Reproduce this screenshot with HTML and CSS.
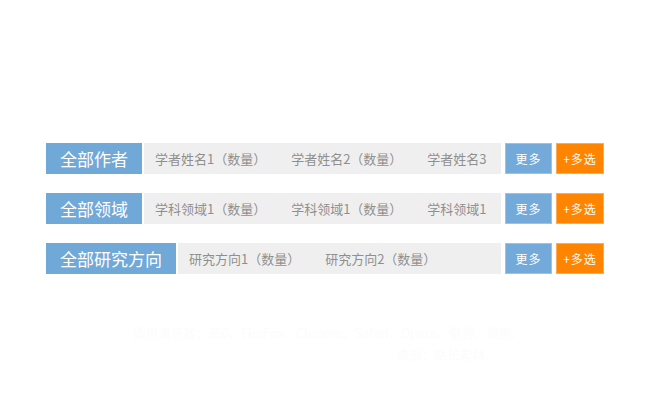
FILE: index.html
```html
<!DOCTYPE html>
<html lang="zh-CN">
<head>
<meta charset="utf-8">
<title>筛选</title>
<link rel="stylesheet" href="styles.css">
</head>
<body>
<div class="page">
  <div class="filters">
    <div class="row">
      <div class="label">全部作者</div>
      <div class="list">
        <span class="item">学者姓名1（数量）</span>
        <span class="item">学者姓名2（数量）</span>
        <span class="item">学者姓名3</span>
      </div>
      <div class="btn more">更多</div>
      <div class="btn multi">+多选</div>
    </div>
    <div class="row">
      <div class="label">全部领域</div>
      <div class="list">
        <span class="item">学科领域1（数量）</span>
        <span class="item">学科领域1（数量）</span>
        <span class="item">学科领域1</span>
      </div>
      <div class="btn more">更多</div>
      <div class="btn multi">+多选</div>
    </div>
    <div class="row">
      <div class="label">全部研究方向</div>
      <div class="list">
        <span class="item">研究方向1（数量）</span>
        <span class="item">研究方向2（数量）</span>
      </div>
      <div class="btn more">更多</div>
      <div class="btn multi">+多选</div>
    </div>
  </div>
  <div class="footer">
    <p>适用浏览器：360、FireFox、Chrome、Safari、Opera、傲游、搜狗.</p>
    <p class="src">来源：站长素材</p>
  </div>
</div>
</body>
</html>
```
FILE: styles.css
```css
html, body {
  margin: 0;
  padding: 0;
  background: #ffffff;
}
body {
  font-family: "Noto Sans CJK SC", "Noto Sans", sans-serif;
}
.page {
  padding-top: 143px;
}
.filters {
  width: 558px;
  margin-left: 46px;
  display: flex;
  flex-direction: column;
  gap: 19px;
}
.row {
  display: flex;
  height: 31px;
}
.label {
  background: #70a8d8;
  color: #ffffff;
  font-size: 17px;
  line-height: 31px;
  padding: 0 14px;
  white-space: nowrap;
}
.list {
  flex: 1;
  min-width: 0;
  margin-left: 2px;
  margin-right: 4px;
  background: #efefef;
  padding-left: 11px;
  overflow: hidden;
  white-space: nowrap;
  font-size: 13px;
  line-height: 31px;
  color: #8f8f8f;
}
.item {
  display: inline-block;
  margin-right: 22px;
}
.btn {
  box-sizing: border-box;
  height: 31px;
  line-height: 29px;
  text-align: center;
  color: #ffffff;
  font-size: 12px;
  letter-spacing: 1px;
}
.more {
  width: 47px;
  background: #73aad9;
  border: 1px solid #9cc3e6;
}
.multi {
  width: 48px;
  margin-left: 4px;
  background: #ff8400;
  border: 1px solid #ffab55;
}
.footer {
  margin-top: 48px;
  color: #fcfcfc;
  font-size: 12.5px;
}
.footer p {
  margin: 0;
  padding-left: 133px;
  line-height: 22px;
}
.footer .src {
  padding-left: 397px;
}
```
